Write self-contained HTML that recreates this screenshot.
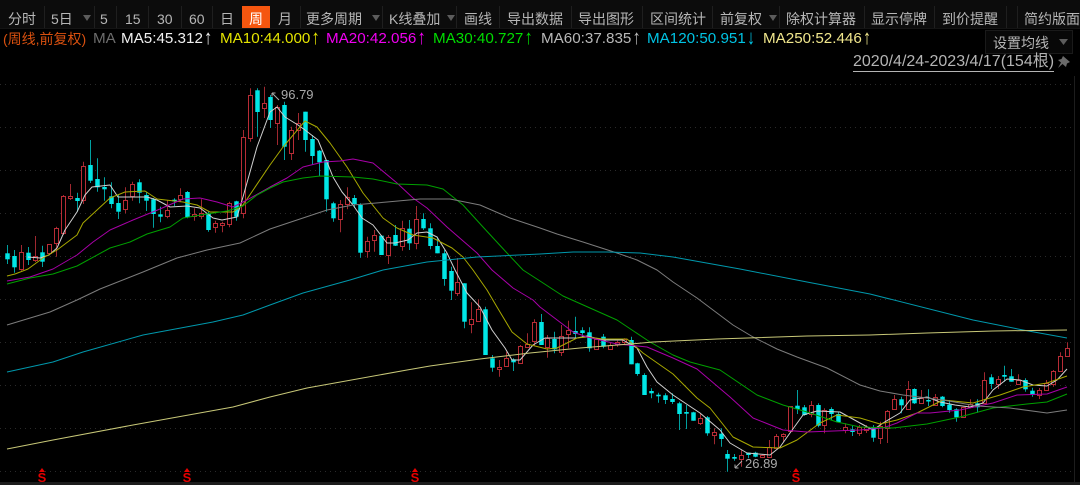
<!DOCTYPE html>
<html lang="zh">
<head>
<meta charset="utf-8">
<title>K线图</title>
<style>
html,body{margin:0;padding:0;background:#000;width:1080px;height:485px;overflow:hidden}
body{position:relative;font-family:"Liberation Sans","Noto Sans CJK SC",sans-serif}
#bar{position:absolute;left:0;top:0;width:1080px;height:29px;background:#0c0c0c;border-bottom:1px solid #141414;box-sizing:border-box}
#bar i{position:absolute;top:6px;height:22px;width:1px;background:#1f1f1f}
#bar b.t{position:absolute;width:0;height:0;border-left:4.5px solid transparent;border-right:4.5px solid transparent;border-top:6px solid #5c5c5c;top:15px}
.tb{position:absolute;top:8px;height:22px;line-height:22px;font-size:14px;color:#b6b6b6;white-space:nowrap}
#on{position:absolute;left:242px;top:6px;width:28px;height:22px;background:#f5560f}
.lg{position:absolute;top:30px;height:18px;line-height:18px;font-size:15.2px;white-space:nowrap}
.lg u{text-decoration:none;font-size:17px;line-height:16px;display:inline-block;transform:scale(1,1.2);margin-left:1px}
#set{position:absolute;left:985px;top:30px;width:88px;height:24px;background:#080808;border:1px solid #1a1a1a;box-sizing:border-box}
#date{position:absolute;left:853px;top:53px;font-size:16px;line-height:18px;color:#b4b4b4;border-bottom:1px solid #b4b4b4;white-space:nowrap}
.lb{position:absolute;font-size:13px;line-height:16px;color:#a9a9a9}
svg{position:absolute;left:0;top:0}
</style>
</head>
<body>
<svg id="c" width="1080" height="485" viewBox="0 0 1080 485"></svg>
<div id="bar">
<i style="left:44px"></i><i style="left:94px"></i><i style="left:116px"></i><i style="left:148px"></i><i style="left:181px"></i><i style="left:212px"></i><i style="left:300px"></i><i style="left:382px"></i><i style="left:456px"></i><i style="left:499px"></i><i style="left:571px"></i><i style="left:642px"></i><i style="left:712px"></i><i style="left:779px"></i><i style="left:864px"></i><i style="left:934px"></i><i style="left:1006px"></i><i style="left:1017px"></i>
<div id="on"></div>
<span class="tb" style="left:8px">分时</span>
<span class="tb" style="left:51px">5日</span><b class="t" style="left:83px"></b>
<span class="tb" style="left:100px">5</span>
<span class="tb" style="left:125px">15</span>
<span class="tb" style="left:157px">30</span>
<span class="tb" style="left:189px">60</span>
<span class="tb" style="left:220px">日</span>
<span class="tb" style="left:249px;color:#fff">周</span>
<span class="tb" style="left:278px">月</span>
<span class="tb" style="left:306px">更多周期</span><b class="t" style="left:372px"></b>
<span class="tb" style="left:389px">K线叠加</span><b class="t" style="left:447px"></b>
<span class="tb" style="left:464px">画线</span>
<span class="tb" style="left:507px">导出数据</span>
<span class="tb" style="left:578px">导出图形</span>
<span class="tb" style="left:650px">区间统计</span>
<span class="tb" style="left:720px">前复权</span><b class="t" style="left:769px"></b>
<span class="tb" style="left:786px">除权计算器</span>
<span class="tb" style="left:871px">显示停牌</span>
<span class="tb" style="left:942px">到价提醒</span>
<span class="tb" style="left:1024px">简约版面</span>
</div>
<span class="lg" style="left:3px;color:#d8500f;font-size:14px">(周线,前复权)</span>
<span class="lg" style="left:93px;color:#6c6c6c">MA</span>
<span class="lg" style="left:121px;color:#f0f0f0">MA5:45.312<u>↑</u></span>
<span class="lg" style="left:220px;color:#e4e400">MA10:44.000<u>↑</u></span>
<span class="lg" style="left:326px;color:#f000f0">MA20:42.056<u>↑</u></span>
<span class="lg" style="left:433px;color:#00dc00">MA30:40.727<u>↑</u></span>
<span class="lg" style="left:541px;color:#b8b8b8">MA60:37.835<u>↑</u></span>
<span class="lg" style="left:647px;color:#00c4e4">MA120:50.951<u>↓</u></span>
<span class="lg" style="left:763px;color:#f0e68c">MA250:52.446<u>↑</u></span>
<div id="set"></div>
<span class="tb" style="left:993px;top:32px">设置均线</span>
<svg width="1080" height="80" viewBox="0 0 1080 80" style="pointer-events:none">
<polygon points="1059,39 1068,39 1063.5,45" fill="#5c5c5c"/>
<path d="M1063 56 L1070 62 L1067 63.5 L1066 67 L1062.5 64 L1058 68 L1061 62.5 L1058 60 L1061.5 59 Z" fill="#6a6a6a"/>
</svg>
<span id="date">2020/4/24-2023/4/17(154根)</span>
<span class="lb" style="left:281px;top:87px">96.79</span>
<span class="lb" style="left:745px;top:456px">26.89</span>
<script>
var D=[[0,245,253.3,259.3,264],[0,250,256,267.3,272.7],[1,245,251.7,269,270.7],[0,247,252.7,260,265],[1,236,256,260,262],[0,245.7,252.3,261.7,267],[1,244,244.3,253.3,255],[1,226.7,228,243.3,256.7],[1,195,196,233,235],[1,184,195.7,197.3,200],[0,192.7,198,201,211.7],[1,161.7,166.3,200,204],[0,140,165,180.7,183],[0,158.3,179,187.3,191.7],[0,177.3,187,189.3,200.7],[0,182.3,196.3,204,208.3],[0,195,203,211.7,219],[1,187.3,200,209.3,213.3],[1,181.7,184,195.7,200.7],[0,179.3,182.3,192.7,203.3],[0,191.7,195,200.7,211],[0,198,199.3,214,227.7],[0,206.7,214.3,216.7,222.3],[1,200,210.3,216.7,218.3],[0,198.3,199.7,201.3,206],[1,188.3,195.3,199.3,201.7],[0,191,192,217.3,218.3],[1,208.3,214.3,216.7,220.7],[1,199.3,213.3,216,219.3],[0,211.7,213.3,230,231.7],[1,220.7,223.3,227.3,232.7],[1,221.7,223.3,224.3,232.3],[1,201.7,203,224.3,227.3],[0,200.7,201.3,216.7,220.7],[1,130,137.3,213.7,218.3],[1,88.3,95,137.7,141.7],[0,88.3,90.3,112,136.7],[1,86.7,103.3,108.7,118],[0,95,97,120,128],
[1,105,106.7,122.3,145],[0,101.7,105,146.7,160],[1,126.7,130,152.7,160],[1,113,122.7,130,140],[0,111.7,111.7,140,151.7],[0,135,139,156,165],[0,150,150.7,162.3,176],[0,160,160,199.3,211.7],[0,201.7,203.3,218.3,221.7],[1,200,203.7,218.3,232.3],[1,187.3,196.7,204,209.3],[0,195,198,204,208],[0,203.3,205,252.7,257.7],[1,236.7,241.3,251.7,257.7],[1,230,235.3,240,251.7],[0,235,235.7,255,255],[1,235,237.3,255.7,264],[0,225,235,245.7,246],[1,220.7,228,246,250.7],[0,220,228.7,243.3,250],[1,206,219.3,243.3,249.3],[0,213.3,219,228.3,230],[0,223.3,228.3,246,249.3],[0,236.7,246,253.3,253.3],[0,250,253.3,279,285.7],[0,266.7,271,290.7,300],[1,258,281.7,292.3,296],[0,283.3,283.3,321.7,328.3],[1,302.3,319.3,324.3,333.3],[1,299.3,309.3,321.7,321.7],[0,306.7,309.3,355,355],[0,355,358.3,367.7,371.7],[1,360,366.7,369,376.7],[1,351.7,358.3,366.7,366.7],[0,358.3,359.3,362.3,371],[1,345,346,362.7,363.3],[1,333.3,344,346.7,347.3],[1,319.3,322,341,346],[0,314,322,345,345],[1,335,338.3,347.3,357.7],[0,331.7,339,349.3,353.3],[1,325,335.7,351.7,356],[1,320.7,330.3,334.3,348.3],[0,316.7,331,334,338.3],[0,327.3,330.3,333,336.7],[0,327.3,332.3,348.3,351.7],[1,338.3,339,349.3,350],[0,334,336.7,346.7,348.3],[1,343,345,349,349.5],[1,340.7,341.7,344,346.7],[1,338.3,339.3,342.7,345],[0,336.7,340,364.3,364.3],[0,362.7,363.3,374,375.7],[0,373.3,375,395,395],[0,388.3,391,393.3,398.3],[0,392.7,394.7,396.3,402.7],[0,393.3,395.3,400,404],[0,393.3,399,402,404],[0,401.7,403.3,414,430],[0,405,412,413.7,429],[0,411.7,412.3,420.7,420.7],
[1,414,417.7,422.7,425],[0,416,417.3,433.3,435.7],[1,428.3,432,435,444.3],[0,428.3,433.7,439,446.7],[0,450,454,458.7,471.7],[0,454,457,458.7,460.7],[1,450,455,458.7,466.7],[0,452.7,452.7,455,458.3],[0,451.7,452.7,456.7,457.3],[1,454.3,454.7,456.7,457.3],[1,440,446.7,456.7,457.3],[1,434,436,448.3,449],[1,433.3,434,435,441.7],[1,406,406,430.7,431.7],[0,390,405.7,409,414],[0,405,407.3,415,415.7],[1,401,405,414.3,417.3],[0,403.3,405,425.7,427.3],[1,408.3,410,425,433.3],[0,407.3,409,414,420],[0,411.7,414,422.3,422.3],[1,423.3,427.3,430,433.3],[0,425.7,429.3,432,436],[1,425,427.3,433,436],[1,425,426.7,430,433],[0,425,427.3,437.7,441.7],[1,421.7,426,437.7,444],[1,410,410.7,427.3,443],[1,395,399.3,409,410],[0,396.7,399.3,405.3,413.3],[1,381,389.3,409.3,410],[0,388.3,389,403.3,404],[1,390,398,403.3,404],[0,389.3,400,401.3,406],[1,394,396.7,405,406],[0,396,396.7,406,407.3],[0,400,404.7,410,412.7],[0,408.3,409.3,417.3,421.7],[1,407.3,407.3,417.3,417.3],[1,399.3,404,407.3,408.3],[0,399.3,403.3,407.3,412.7],[1,372.3,380,403.3,404],[0,374.3,377.3,384,389],[1,376,379,384,389],[0,365.7,375,376.7,381.7],[0,369,376.3,381.7,381.7],[1,374.3,380,384.3,385],[0,378.3,380,389.3,391.7],[0,387.7,390.7,395,396.7],[1,388,390,395,399],[1,380,383.3,390,391],[1,370,370.7,384,386.7],[1,352.3,356,371,371.7],[1,342.3,348.3,356.7,356.7]];
var L=[
["#d0d0d0","28,257 40,258 49,255 57,248 65,230 77,212 85,195 92,187 110,185 118,197 125,197 147,197 157,200 170,207 187,206 200,208 213,218 222,220 237,217 243,197 257,147 270,112 277,107 285,117 298,125 305,130 318,140 325,157 333,177 342,192 353,205 362,218 373,225 387,243 395,243 408,240 417,233 427,232 437,237 447,253 455,270 467,293 480,307 492,330 505,348 512,360 520,360 533,345 545,338 562,338 577,338 587,336 603,340 623,340 637,348 647,367 657,382 673,395 700,413 720,430 730,443 747,453 770,455 780,447 790,433 803,415 817,411 840,412 860,423 873,430 883,423 900,413 910,400 927,397 940,402 955,405 970,407 983,403 993,390 1007,379 1020,380 1033,385 1047,386 1057,380 1067,369"],
["#a8a800","7,276 15,274 28,269 43,258 57,250 77,235 83,223 110,198 125,192 145,191 157,199 183,202 197,205 210,212 233,212 243,205 270,165 283,147 305,121 317,127 330,143 347,167 363,193 383,218 397,228 413,235 433,238 452,248 463,257 473,270 487,290 497,307 512,332 527,344 547,349 557,348 577,338 587,337 603,339 627,339 643,353 673,374 697,398 710,408 733,437 753,447 780,448 797,440 820,423 837,415 860,418 880,424 897,420 917,413 943,400 973,403 1000,395 1023,387 1047,383 1067,376"],
["#a800a8","7,281 30,277 53,269 77,255 93,242 110,230 133,220 160,209 183,199 200,198 217,202 233,207 247,200 270,187 287,178 303,167 323,162 340,161 353,159 373,163 397,183 413,198 427,208 447,227 477,253 492,270 513,288 533,300 540,307 573,332 587,337 617,344 647,347 673,358 697,369 730,397 753,418 783,430 807,432 860,430 883,428 897,423 917,413 930,413 960,410 993,403 1017,395 1047,394 1067,387"],
["#00a000","7,284 30,278 53,274 77,266 110,248 130,242 147,234 170,227 183,218 207,214 227,211 243,206 257,195 270,188 283,182 303,178 320,176 353,177 373,179 397,184 427,185 443,189 463,205 483,227 507,253 523,270 540,281 563,296 590,308 617,320 650,342 673,355 690,362 720,370 757,395 783,405 807,412 837,422 860,427 893,428 927,424 960,417 993,408 1027,404 1047,402 1067,394"],
["#7c7c7c","7,325 50,312 77,300 100,289 143,272 177,258 207,250 240,243 270,229 297,220 327,210 353,205 387,202 420,199 450,199 480,205 510,218 540,228 557,234 583,242 617,253 637,260 657,270 673,282 697,298 733,325 753,337 777,349 797,357 827,368 860,385 880,391 903,395 943,400 977,406 1010,408 1047,413 1067,410"],
["#0098ac","7,372 53,362 83,352 143,335 213,322 243,315 270,305 303,293 350,280 383,270 427,262 477,257 540,254 573,252 607,252 640,253 673,257 740,269 807,282 870,294 973,320 1023,330 1067,338"],
["#c8c878","7,449 53,440 133,425 233,407 270,397 307,388 407,370 430,366 480,359 530,353 580,348 630,344 653,342 717,339 807,336 870,335 927,333 993,331 1067,330"]];
var s='';
[84,127,170,213,256,299,342,385,428,471].forEach(function(y){s+='<line x1="0" x2="1074" y1="'+(y+.5)+'" y2="'+(y+.5)+'" stroke="#2a2a2a" stroke-dasharray="1 4"/>'});
s+='<rect x="1074" y="76" width="1" height="409" fill="#1d1d1d"/><rect x="0" y="482" width="1080" height="3" fill="#1c1c1c"/>';
D.forEach(function(d,i){
 var x=7.3+6.925*i,cx=Math.round(x)+.5,r=d[0]==1;
 s+='<line x1="'+cx+'" x2="'+cx+'" y1="'+d[1]+'" y2="'+d[4]+'" stroke="'+(r?'#a02830':'#00a0a0')+'"/>';
 var h=Math.max(d[3]-d[2],1.5);
 if(r){s+='<rect x="'+(cx-2)+'" y="'+(Math.round(d[2])+.5)+'" width="4" height="'+Math.max(Math.round(h),1)+'" fill="#000" stroke="#b82c36"/>'}
 else{s+='<rect x="'+(cx-2.25)+'" y="'+d[2]+'" width="4.5" height="'+h+'" fill="#00e6e6"/>'}
});
L.forEach(function(l){s+='<polyline points="'+l[1]+'" fill="none" stroke="'+l[0]+'" stroke-width="1" stroke-linejoin="round"/>'});
s+='<path d="M279 100 L272 93 M272 93 h3.5 M272 93 v3.5" stroke="#aaa" fill="none"/>';
s+='<path d="M735 468 L742 461 M735 468 h3.5 M735 468 v-3.5" stroke="#aaa" fill="none"/>';
[42,187,415,796].forEach(function(x){
 s+='<polygon points="'+(x-3)+',472 '+x+',468 '+(x+3)+',472" fill="#e60000"/>';
 s+='<text x="'+x+'" y="482" text-anchor="middle" font-family="Liberation Sans" font-weight="bold" font-size="13" fill="#e60000">S</text>';
});
document.getElementById('c').innerHTML=s;
</script>
</body>
</html>
